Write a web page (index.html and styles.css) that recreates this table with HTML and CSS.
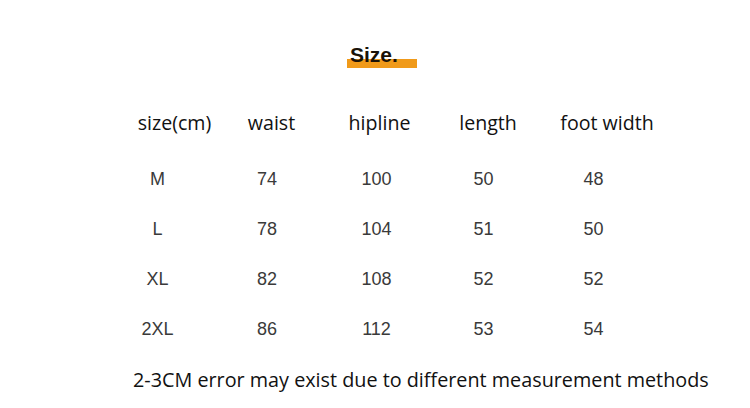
FILE: index.html
```html
<!DOCTYPE html>
<html>
<head>
<meta charset="utf-8">
<link rel="stylesheet" href="styles.css">
</head>
<body>
<div class="page">
  <div class="title-wrap"><h1 class="title">Size.</h1></div>
  <div class="table">
    <div class="row head">
      <span>size(cm)</span><span>waist</span><span>hipline</span><span>length</span><span>foot width</span>
    </div>
    <div class="row data"><span>M</span><span>74</span><span>100</span><span>50</span><span>48</span></div>
    <div class="row data"><span>L</span><span>78</span><span>104</span><span>51</span><span>50</span></div>
    <div class="row data"><span>XL</span><span>82</span><span>108</span><span>52</span><span>52</span></div>
    <div class="row data"><span>2XL</span><span>86</span><span>112</span><span>53</span><span>54</span></div>
  </div>
  <p class="note">2-3CM error may exist due to different measurement methods</p>
</div>
</body>
</html>
```
FILE: styles.css
```css
html, body {
  margin: 0;
  padding: 0;
  background: #ffffff;
}
.page {
  width: 750px;
  height: 408px;
  position: relative;
  overflow: hidden;
  font-family: "Open Sans", "Liberation Sans", sans-serif;
  color: #111;
}
.title-wrap {
  display: flex;
  padding-top: 42px;
  padding-left: 347px;
}
.title {
  margin: 0;
  font-family: "Liberation Sans", Arial, sans-serif;
  font-size: 21px;
  font-weight: 700;
  line-height: 26px;
  color: #1a1208;
  padding: 0 19px 0 3px;
  background: linear-gradient(to bottom, transparent 0, transparent 17px, #f09a1a 17px, #f09a1a 26px, transparent 26px);
}
.table {
  margin-top: 41px;
  padding-left: 120px;
}
.row {
  display: grid;
  justify-items: center;
  align-items: center;
}
.head {
  grid-template-columns: 109px 85px 131px 86px 152px;
  height: 26px;
  font-size: 19.6px;
  color: #111;
  margin-bottom: 19px;
}
.data {
  grid-template-columns: 75px 144px 75px 139px 81px;
  height: 50px;
  font-family: "Liberation Sans", Arial, sans-serif;
  font-size: 18px;
  font-weight: 400;
  color: #3a3a3a;
}
.note {
  margin: 13px 0 0 133px;
  font-size: 19.8px;
  line-height: 26px;
  color: #111;
}
```
